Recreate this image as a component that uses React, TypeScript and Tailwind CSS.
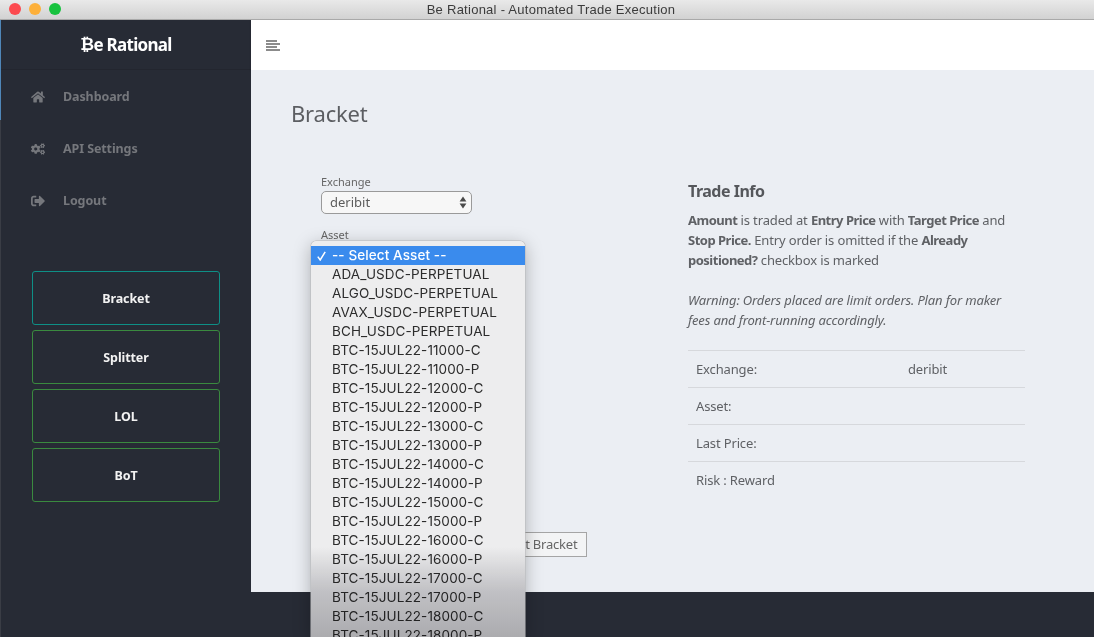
import { FaHome, FaCogs, FaSignOutAlt } from "react-icons/fa";

const strikes = ["11000", "12000", "13000", "14000", "15000", "16000", "17000", "18000"];
const options = [
  "ADA_USDC-PERPETUAL",
  "ALGO_USDC-PERPETUAL",
  "AVAX_USDC-PERPETUAL",
  "BCH_USDC-PERPETUAL",
  ...strikes.flatMap((s) => [`BTC-15JUL22-${s}-C`, `BTC-15JUL22-${s}-P`]),
];

function Arrows() {
  return (
    <svg width="8" height="13" viewBox="0 0 8 13">
      <path d="M4 0.5 L7.4 5.4 H0.6 Z M4 12.5 L7.4 7.6 H0.6 Z" fill="#4a4a4a" />
    </svg>
  );
}

function SelectBox({ value }: { value?: string }) {
  return (
    <div className="flex h-[23px] w-[151px] items-center justify-between rounded-[5px] border border-[#9a9a9a] bg-[#f7f7f7] pl-2 pr-[4px] text-[13px] text-[#5c5c5c]">
      <span>{value}</span>
      <Arrows />
    </div>
  );
}

function NavItem({ icon, label }: { icon: React.ReactNode; label: string }) {
  return (
    <div className="flex h-[52px] items-center pl-[30px] text-[12.5px] font-bold tracking-[-0.1px] text-[#75777c]">
      <span className="flex w-[32px] text-[14px]">{icon}</span>
      {label}
    </div>
  );
}

function SideButton({ label, teal }: { label: string; teal?: boolean }) {
  return (
    <div
      className={`flex h-[54px] w-[188px] items-center justify-center rounded-[3px] border pt-[2px] text-[12.5px] font-bold tracking-[-0.1px] text-[#f2f2f2] ${
        teal ? "border-[#0e8f86]" : "border-[#3a8a3f]"
      }`}
    >
      {label}
    </div>
  );
}

function Row({ label, value }: { label: string; value?: string }) {
  return (
    <div className="flex h-[37px] items-center border-t border-[#d6d8dc] pl-2">
      <span className="w-[212px]">{label}</span>
      <span>{value}</span>
    </div>
  );
}

function B({ children }: { children: React.ReactNode }) {
  return <b className="tracking-[-0.5px]">{children}</b>;
}

export default function App() {
  return (
    <div className="relative flex h-[637px] w-[1094px] flex-col overflow-hidden bg-[#272b35] font-['Noto_Sans',sans-serif] text-[#5f6165]">
      <div className="relative flex h-[20px] shrink-0 items-center justify-center border-b border-[#a9a9a9] bg-gradient-to-b from-[#e9e9e9] to-[#d2d2d2] pl-2 font-['Liberation_Sans',sans-serif] text-[13px] tracking-[0.26px] text-[#3b3b3b]">
        <div className="absolute left-[9px] top-[3px] flex gap-[8px]">
          <span className="h-[12px] w-[12px] rounded-full bg-[#fc4a4f]" />
          <span className="h-[12px] w-[12px] rounded-full bg-[#fdb03a]" />
          <span className="h-[12px] w-[12px] rounded-full bg-[#17c23f]" />
        </div>
        Be Rational - Automated Trade Execution
      </div>

      <div className="flex min-h-0 flex-1">
        <div className="flex w-px shrink-0 flex-col">
          <div className="h-[100px] bg-[#4f86b8]" />
          <div className="flex-1 bg-[#3a3d45]" />
        </div>

        <aside className="flex w-[250px] shrink-0 flex-col bg-[#272b35]">
          <div className="flex h-[50px] items-center justify-center border-b border-[#23262f] text-[17px] font-bold tracking-[-0.7px] text-white">
            <span className="font-['DejaVu_Sans',sans-serif]">₿</span>e Rational
          </div>
          <nav className="mt-[1px]">
            <NavItem icon={<FaHome />} label="Dashboard" />
            <NavItem icon={<FaCogs />} label="API Settings" />
            <NavItem icon={<FaSignOutAlt />} label="Logout" />
          </nav>
          <div className="ml-[31px] mt-[44px] flex flex-col gap-[5px]">
            <SideButton label="Bracket" teal />
            <SideButton label="Splitter" />
            <SideButton label="LOL" />
            <SideButton label="BoT" />
          </div>
        </aside>

        <div className="flex min-w-0 flex-1 flex-col">
          <header className="flex h-[50px] shrink-0 items-center bg-white pl-[15px] shadow-[0_1px_2px_rgba(0,0,0,0.16)]">
            <svg width="14" height="11" viewBox="0 0 14 11">
              <path d="M0 1H11M0 4H14M0 7H11M0 10H14" stroke="#666" strokeWidth="1.7" />
            </svg>
          </header>

          <main className="h-[522px] shrink-0 bg-[#ebeef3] pl-10 pt-[28px]">
            <h1 className="text-[22px] leading-[30px] tracking-[-0.2px] text-[#5c5e62]">Bracket</h1>
            <div className="ml-[30px] mt-[47px] flex">
              <div className="w-[367px]">
                <label className="block text-[11px] leading-[13px] text-[#666]">Exchange</label>
                <div className="mt-[3px]">
                  <SelectBox value="deribit" />
                </div>
                <label className="mt-[14px] block text-[11px] leading-[13px] text-[#666]">Asset</label>
                <div className="mt-[3px]">
                  <SelectBox />
                </div>
                <div className="mt-[265px] flex w-[266px] justify-end">
                  <button className="h-[25px] w-[109px] border border-[#a5a5a5] bg-[#f3f4f5] text-[13px] tracking-[-0.2px] text-[#666]">
                    Submit Bracket
                  </button>
                </div>
              </div>
              <div className="mt-px w-[337px] text-[13px] leading-[20px] tracking-[-0.14px]">
                <h2 className="text-[16px] font-bold leading-[30px] tracking-[-0.5px] text-[#55575b]">Trade Info</h2>
                <p className="mt-[4px]">
                  <B>Amount</B> is traded at <B>Entry Price</B> with <B>Target Price</B> and{" "}
                  <B>Stop Price.</B> Entry order is omitted if the <B>Already positioned?</B> checkbox is marked
                </p>
                <p className="mt-[20px] italic">
                  Warning: Orders placed are limit orders. Plan for maker fees and front-running accordingly.
                </p>
                <div className="mt-[20px]">
                  <Row label="Exchange:" value="deribit" />
                  <Row label="Asset:" />
                  <Row label="Last Price:" />
                  <Row label="Risk : Reward" />
                </div>
              </div>
            </div>
          </main>
          <div className="flex-1 bg-[#272b35]" />
        </div>
      </div>

      <div className="absolute left-[311px] top-[241px] h-[396px] w-[214px] overflow-hidden rounded-t-[5px] bg-[#ededee] pt-[5px] font-['Inter',sans-serif] text-[13.5px] leading-[19px] tracking-[0.1px] text-[#2c2c2c] shadow-[0_0_0_0.5px_#b8b8ba,0_4px_18px_rgba(0,0,0,0.28)]">
        <div className="flex h-[19px] items-center bg-[#3a8bed] pl-[6px] font-medium text-white">
          <svg width="9" height="10" viewBox="0 0 9 10" className="mr-[6px]">
            <path d="M0.8 5.6 L3.2 9 L8.2 0.8" fill="none" stroke="#fff" strokeWidth="1.5" />
          </svg>
          -- Select Asset --
        </div>
        {options.map((o) => (
          <div key={o} className="h-[19px] pl-[21px] whitespace-nowrap">
            {o}
          </div>
        ))}
        <div className="pointer-events-none absolute inset-x-0 bottom-0 h-[90px] bg-gradient-to-b from-[#ffffff] via-[#cfcfd2] via-[50%] to-[#b9b9bc] mix-blend-multiply" />
      </div>
    </div>
  );
}
